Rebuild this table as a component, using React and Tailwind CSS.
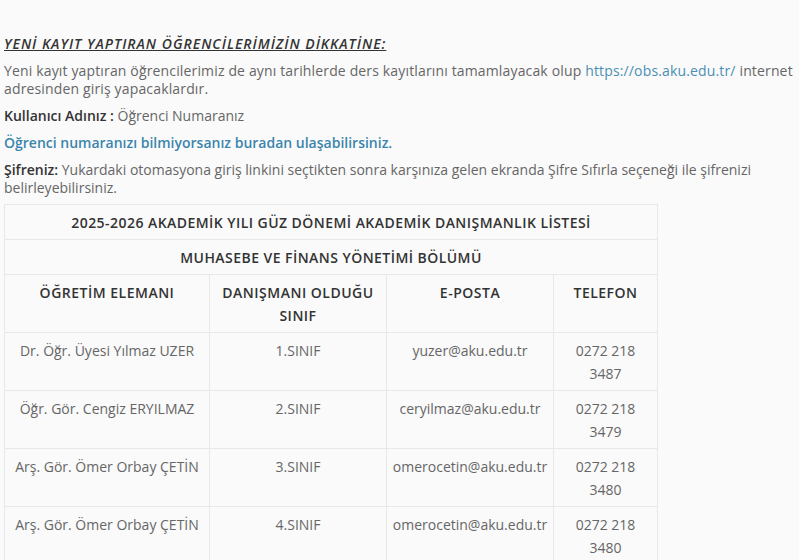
const rows = [
  ['Dr. Öğr. Üyesi Yılmaz UZER', '1.SINIF', 'yuzer@aku.edu.tr', '0272 218 3487'],
  ['Öğr. Gör. Cengiz ERYILMAZ', '2.SINIF', 'ceryilmaz@aku.edu.tr', '0272 218 3479'],
  ['Arş. Gör. Ömer Orbay ÇETİN', '3.SINIF', 'omerocetin@aku.edu.tr', '0272 218 3480'],
  ['Arş. Gör. Ömer Orbay ÇETİN', '4.SINIF', 'omerocetin@aku.edu.tr', '0272 218 3480'],
]

const cell = 'border border-[#e8e8e8] py-[5.5px] text-center'

export default function App() {
  return (
    <div className="h-[560px] overflow-hidden bg-[#fafafa] px-[4px] pt-[35px] text-[14px] leading-[18px] text-[#666]" style={{ fontFamily: '"Open Sans", sans-serif' }}>
      <p className="font-semibold italic tracking-[1px] text-[#333] underline">YENİ KAYIT YAPTIRAN ÖĞRENCİLERİMİZİN DİKKATİNE:</p>
      <p className="mt-[9px] tracking-[0.15px]">
        Yeni kayıt yaptıran öğrencilerimiz de aynı tarihlerde ders kayıtlarını tamamlayacak olup{' '}
        <a href="#" className="text-[#4a8fb3]">https://obs.aku.edu.tr/</a> internet adresinden giriş yapacaklardır.
      </p>
      <p className="mt-[9px]">
        <span className="font-semibold text-[#333]">Kullanıcı Adınız :</span> Öğrenci Numaranız
      </p>
      <p className="mt-[9px] font-semibold text-[#3a85ad]">Öğrenci numaranızı bilmiyorsanız buradan ulaşabilirsiniz.</p>
      <p className="mt-[9px]">
        <span className="font-semibold text-[#333]">Şifreniz:</span> Yukardaki otomasyona giriş linkini seçtikten sonra karşınıza gelen ekranda Şifre Sıfırla seçeneği ile şifrenizi belirleyebilirsiniz.
      </p>
      <table className="mt-[7px] w-[653px] table-fixed border-collapse leading-[23px]">
        <colgroup>
          <col className="w-[205px]" />
          <col className="w-[177px]" />
          <col className="w-[167px]" />
          <col className="w-[104px]" />
        </colgroup>
        <tbody>
          <tr>
            <td colSpan={4} className={cell + ' font-semibold tracking-[0.45px] text-[#333]'}>
              2025-2026 AKADEMİK YILI GÜZ DÖNEMİ AKADEMİK DANIŞMANLIK LİSTESİ
            </td>
          </tr>
          <tr>
            <td colSpan={4} className={cell + ' font-semibold tracking-[0.45px] text-[#333]'}>
              MUHASEBE VE FİNANS YÖNETİMİ BÖLÜMÜ
            </td>
          </tr>
          <tr className="align-top font-semibold tracking-[0.5px] text-[#333]">
            <td className={cell + ' px-2'}>ÖĞRETİM ELEMANI</td>
            <td className={cell + ' px-2'}>DANIŞMANI OLDUĞU SINIF</td>
            <td className={cell + ' px-2'}>E-POSTA</td>
            <td className={cell + ' px-2'}>TELEFON</td>
          </tr>
          {rows.map((r, i) => (
            <tr key={i} className="align-top">
              <td className={cell + ' px-1'}>{r[0]}</td>
              <td className={cell + ' px-1'}>{r[1]}</td>
              <td className={cell + ' px-1'}>{r[2]}</td>
              <td className={cell + ' px-[14px]'}>{r[3]}</td>
            </tr>
          ))}
        </tbody>
      </table>
    </div>
  )
}
